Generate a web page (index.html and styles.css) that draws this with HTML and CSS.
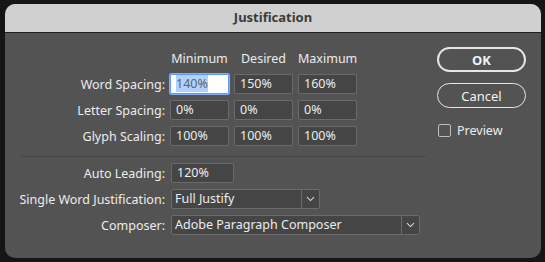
FILE: index.html
```html
<!DOCTYPE html>
<html lang="en">
<head>
    <meta charset="UTF-8">
    <title>Justification</title>
    <link rel="stylesheet" href="styles.css">
</head>
<body>
    <div class="dialog">
        <div class="titlebar">Justification</div>
        <div class="content">
            <div class="main">
                <div class="grid">
                    <span></span>
                    <span class="colhead">Minimum</span>
                    <span class="colhead">Desired</span>
                    <span class="colhead">Maximum</span>

                    <label>Word Spacing:</label>
                    <div class="field focused"><span class="sel">140%</span></div>
                    <div class="field">150%</div>
                    <div class="field">160%</div>

                    <label>Letter Spacing:</label>
                    <div class="field">0%</div>
                    <div class="field">0%</div>
                    <div class="field">0%</div>

                    <label>Glyph Scaling:</label>
                    <div class="field">100%</div>
                    <div class="field">100%</div>
                    <div class="field">100%</div>
                </div>

                <div class="divider"></div>

                <div class="rows">
                    <div class="row">
                        <label>Auto Leading:</label>
                        <div class="field leading">120%</div>
                    </div>
                    <div class="row">
                        <label>Single Word Justification:</label>
                        <div class="select short">
                            <span class="value">Full Justify</span>
                            <span class="arrow">
                                <svg width="9" height="6" viewBox="0 0 9 6"><path d="M1 1.2 L4.5 4.6 L8 1.2" fill="none" stroke="#d8d8d8" stroke-width="1.1"/></svg>
                            </span>
                        </div>
                    </div>
                    <div class="row">
                        <label>Composer:</label>
                        <div class="select long">
                            <span class="value">Adobe Paragraph Composer</span>
                            <span class="arrow">
                                <svg width="9" height="6" viewBox="0 0 9 6"><path d="M1 1.2 L4.5 4.6 L8 1.2" fill="none" stroke="#d8d8d8" stroke-width="1.1"/></svg>
                            </span>
                        </div>
                    </div>
                </div>
            </div>

            <div class="side">
                <button class="btn primary">OK</button>
                <button class="btn">Cancel</button>
                <div class="check">
                    <span class="box"></span>
                    <span>Preview</span>
                </div>
            </div>
        </div>
    </div>
</body>
</html>
```

FILE: styles.css
```css
body {
    margin: 0;
    background: #151515;
    font-family: "Noto Sans", "Open Sans", sans-serif;
    font-size: 12.5px;
    color: #ececec;
}
.dialog {
    margin: 4px 0 0 5px;
    width: 536px;
    height: 254px;
    background-color: #535353;
    border-radius: 10px;
    overflow: hidden;
}
.titlebar {
    height: 28px;
    line-height: 27px;
    background-color: #d0d0d0;
    border-bottom: 1px solid #1e1e1e;
    color: #3b3b3b;
    font-weight: bold;
    font-size: 13px;
    text-align: center;
}
.content {
    display: flex;
}
.main {
    width: 420px;
    padding-top: 18px;
}
.grid {
    display: grid;
    grid-template-columns: 160px 59px 59px 59px;
    column-gap: 5px;
    row-gap: 6px;
    align-items: center;
}
.grid label,
.row label {
    text-align: right;
}
.colhead {
    text-align: center;
    height: 16px;
    line-height: 16px;
    margin-bottom: 1px;
}
.field {
    height: 18px;
    line-height: 18px;
    padding: 0 5px;
    background-color: #454545;
    border: 1px solid #6b6b6b;
    border-radius: 2px;
}
.field.focused {
    background-color: #ffffff;
    border-color: #5e9bf5;
    box-shadow: 0 0 0 1px #7fb0f7;
}
.sel {
    background-color: #b2d1f8;
    color: #56657a;
}
.divider {
    height: 1px;
    background-color: #474747;
    margin: 10px 0 6px 15px;
    width: 406px;
}
.rows {
    display: flex;
    flex-direction: column;
    gap: 6px;
}
.row {
    display: flex;
    align-items: center;
    gap: 6px;
}
.row label {
    width: 160px;
}
.field.leading {
    width: 51px;
}
.select {
    display: flex;
    height: 18px;
    line-height: 18px;
    background-color: #454545;
    border: 1px solid #6b6b6b;
    border-radius: 2px;
}
.select .value {
    flex: 1;
    padding: 0 3px;
}
.select .arrow {
    width: 17px;
    border-left: 1px solid #6b6b6b;
    display: flex;
    align-items: center;
    justify-content: center;
}
.select.short {
    width: 147px;
}
.select.long {
    width: 247px;
}
.side {
    padding: 14px 0 0 12px;
    display: flex;
    flex-direction: column;
    gap: 11px;
}
.btn {
    width: 89px;
    height: 25px;
    border-radius: 13px;
    border: 1px solid #e6e6e6;
    background: transparent;
    color: #f2f2f2;
    font-family: inherit;
    font-size: 13px;
    padding: 0;
}
.btn.primary {
    border-width: 2px;
    font-weight: bold;
}
.check {
    display: flex;
    align-items: center;
    gap: 6px;
    margin: 3px 0 0 1px;
}
.box {
    width: 11px;
    height: 11px;
    border: 1px solid #bdbdbd;
    border-radius: 2px;
}
```
